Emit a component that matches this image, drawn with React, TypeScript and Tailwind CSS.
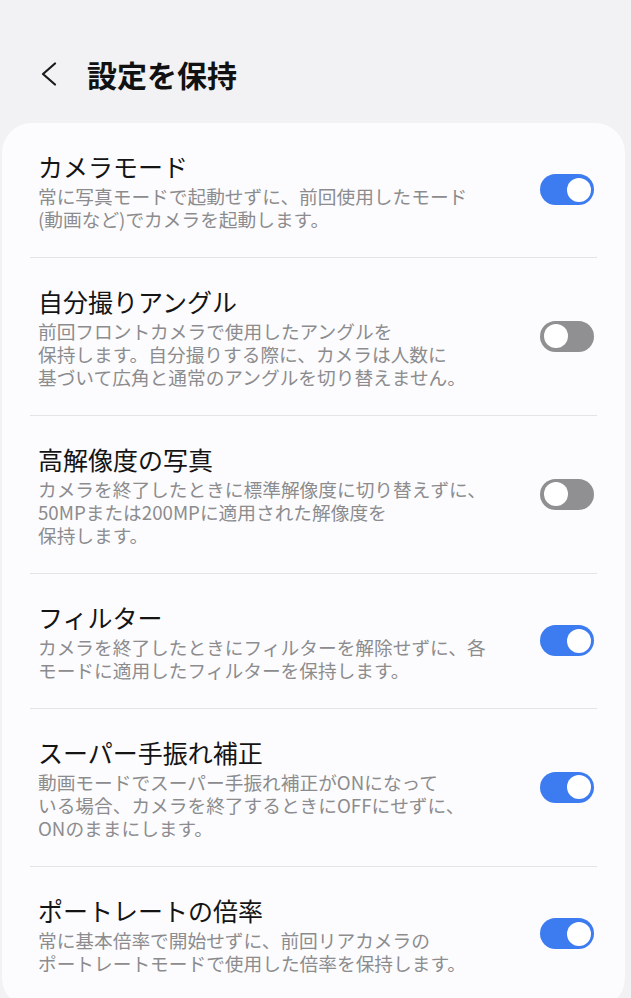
import React from "react";

type Item = {
  title: string;
  lines: string[];
  on: boolean;
};

const items: Item[] = [
  {
    title: "カメラモード",
    lines: ["常に写真モードで起動せずに、前回使用したモード", "(動画など)でカメラを起動します。"],
    on: true,
  },
  {
    title: "自分撮りアングル",
    lines: [
      "前回フロントカメラで使用したアングルを",
      "保持します。自分撮りする際に、カメラは人数に",
      "基づいて広角と通常のアングルを切り替えません。",
    ],
    on: false,
  },
  {
    title: "高解像度の写真",
    lines: [
      "カメラを終了したときに標準解像度に切り替えずに、",
      "50MPまたは200MPに適用された解像度を",
      "保持します。",
    ],
    on: false,
  },
  {
    title: "フィルター",
    lines: ["カメラを終了したときにフィルターを解除せずに、各", "モードに適用したフィルターを保持します。"],
    on: true,
  },
  {
    title: "スーパー手振れ補正",
    lines: [
      "動画モードでスーパー手振れ補正がONになって",
      "いる場合、カメラを終了するときにOFFにせずに、",
      "ONのままにします。",
    ],
    on: true,
  },
  {
    title: "ポートレートの倍率",
    lines: ["常に基本倍率で開始せずに、前回リアカメラの", "ポートレートモードで使用した倍率を保持します。"],
    on: true,
  },
];

const Toggle: React.FC<{ on: boolean }> = ({ on }) => (
  <div
    className={
      on
        ? "flex h-[31px] w-[54px] shrink-0 items-center justify-end rounded-full bg-[#3d7cf0] px-[3.5px]"
        : "flex h-[31px] w-[54px] shrink-0 items-center justify-start rounded-full bg-[#909092] px-[3.5px]"
    }
  >
    <div className="h-[24px] w-[24px] rounded-full bg-white" />
  </div>
);

export default function App() {
  return (
    <div
      className="h-[998px] overflow-hidden bg-[#f2f2f4]"
      style={{ fontFamily: '"Noto Sans CJK JP", "Noto Sans", sans-serif' }}
    >
      <header className="flex h-[123px] items-center pl-[41px] pt-[24px]">
        <svg width="16" height="24" viewBox="0 0 16 24" fill="none" className="shrink-0">
          <path d="M14 1.5 L2 12 L14 22.5" stroke="#1a1a1a" strokeWidth="2.2" strokeLinecap="round" strokeLinejoin="round" />
        </svg>
        <h1 className="ml-[30px] text-[30px] font-bold leading-none text-[#111111]">設定を保持</h1>
      </header>

      <div className="ml-[2px] mr-[6px] rounded-[30px] bg-[#fcfcfe] px-[28px] pb-[34px]">
        {items.map((item, i) => (
          <div
            key={item.title}
            className={
              i < items.length - 1
                ? "flex items-center border-b-[1.5px] border-[#e4e4e6] pb-[27px] pl-[8px] pr-[3px] pt-[26.5px]"
                : "flex items-center pl-[8px] pr-[3px] pt-[26.5px]"
            }
          >
            <div className="flex-1">
              <div className="text-[25px] leading-[32px] text-[#141414]">{item.title}</div>
              <div className="mt-[2.5px] text-[18.7px] leading-[23px] text-[#8c8c8e]">
                {item.lines.map((l) => (
                  <div key={l} className="whitespace-nowrap">
                    {l}
                  </div>
                ))}
              </div>
            </div>
            <Toggle on={item.on} />
          </div>
        ))}
      </div>
    </div>
  );
}
